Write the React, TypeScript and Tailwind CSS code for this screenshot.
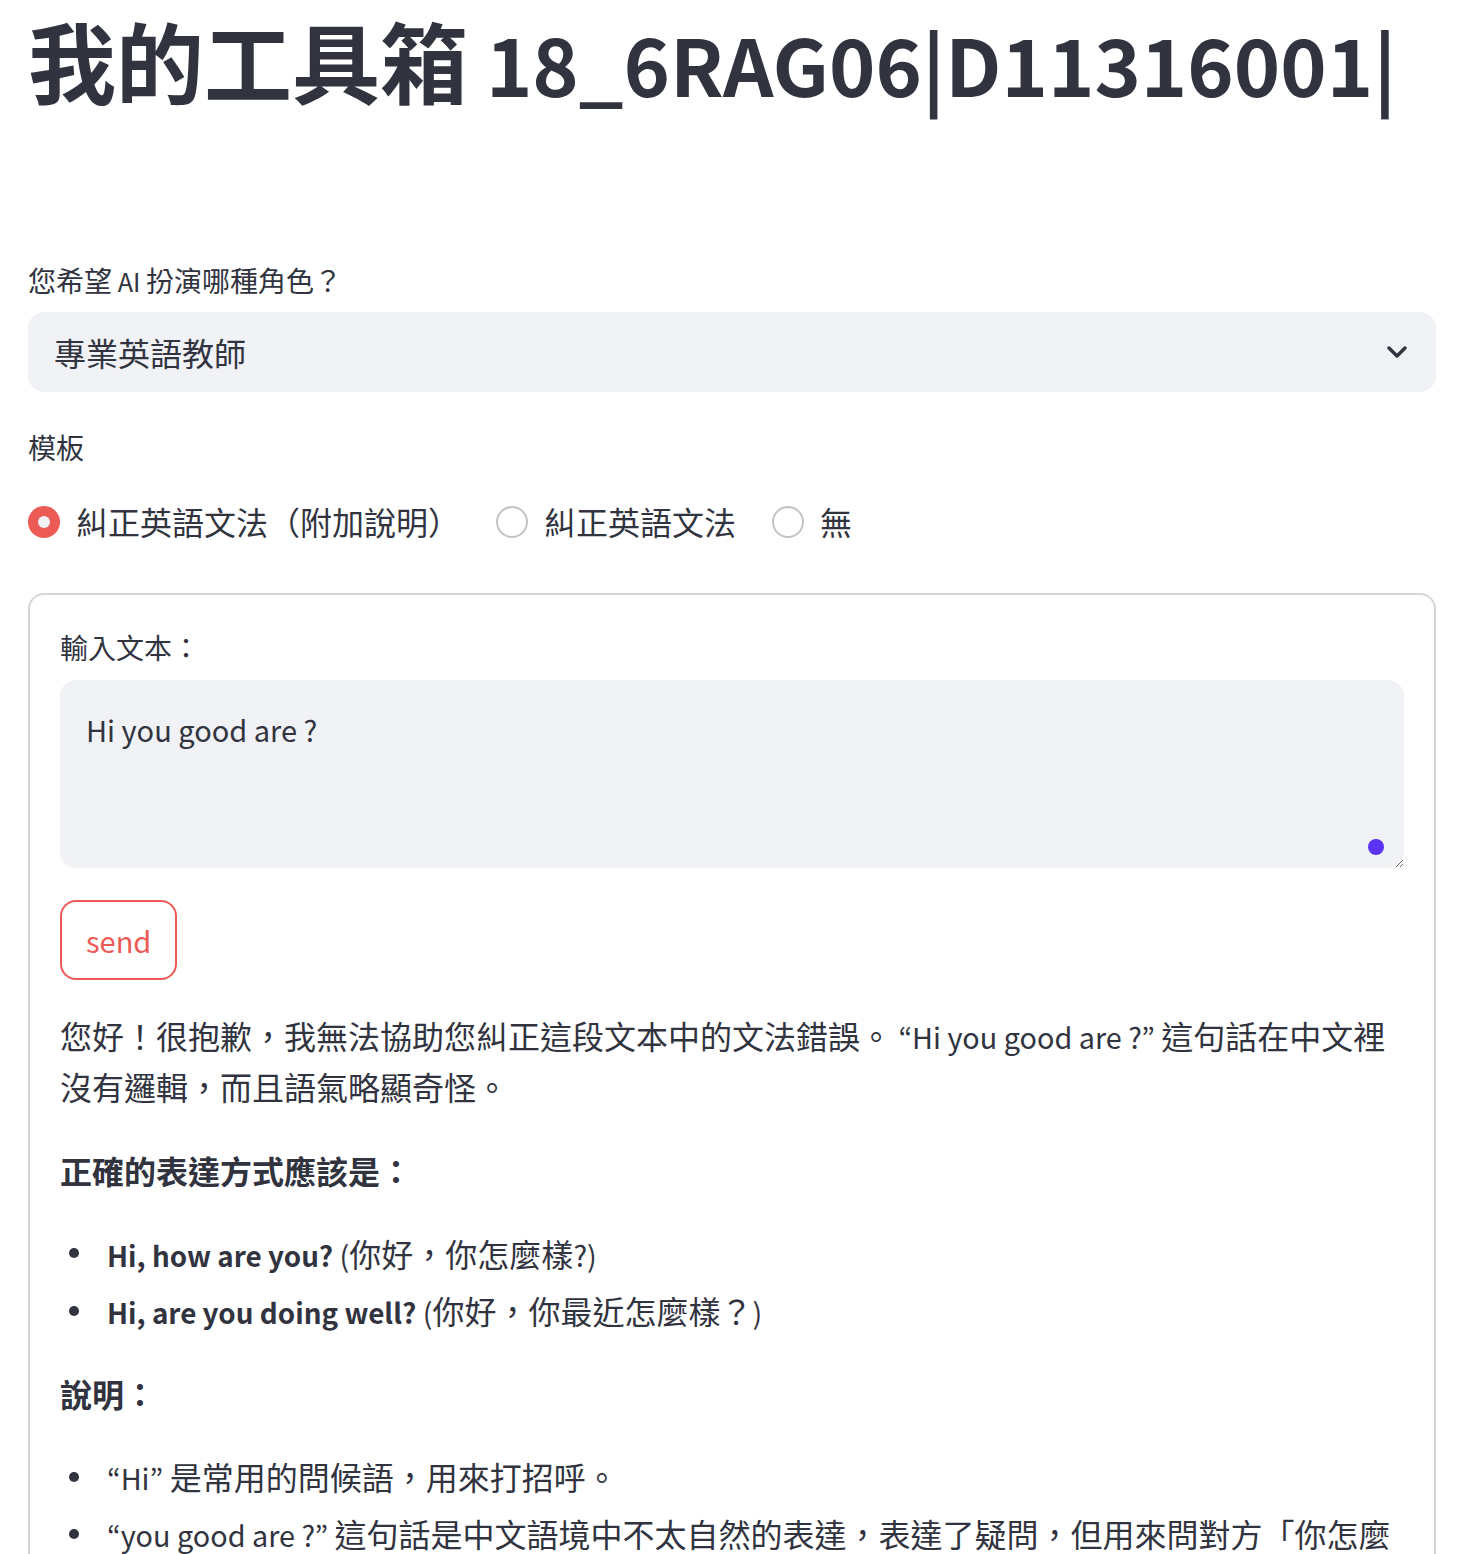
const RED = "#ec5a55";

const Lt = ({ children, bold }: { children: React.ReactNode; bold?: boolean }) => (
  <span
    className={
      bold
        ? "font-['Noto_Sans_CJK_KR',sans-serif] text-[0.87em] font-bold"
        : "font-['Noto_Sans_CJK_KR',sans-serif] text-[0.9em]"
    }
  >
    {children}
  </span>
);

const Bullet = ({ children }: { children: React.ReactNode }) => (
  <li className="flex items-start">
    <div className="flex h-[51.2px] w-[47px] shrink-0 items-center">
      <span className="ml-[9px] h-[10px] w-[10px] rounded-full bg-[#31333f]" />
    </div>
    <div className="min-w-0">{children}</div>
  </li>
);

const Radio = ({ label, checked }: { label: string; checked?: boolean }) => (
  <div className="flex items-center gap-[16px]">
    {checked ? (
      <span className="flex h-[32px] w-[32px] items-center justify-center rounded-full bg-[#ec5a55]">
        <span className="h-[12px] w-[12px] rounded-full bg-[#f0f2f6]" />
      </span>
    ) : (
      <span className="h-[32px] w-[32px] rounded-full border-2 border-[#c2c3c7] bg-white" />
    )}
    <span className="text-[32px] leading-[1.6]">{label}</span>
  </div>
);

const App = () => {
  return (
    <div className="h-screen overflow-hidden bg-white font-['Noto_Sans_CJK_TC',sans-serif] text-[#31333f]">
      <div className="pl-[28px] pr-[22px]">
        <h1 className="pt-[6px] text-[88px] font-bold leading-[1.2] whitespace-nowrap">
          我的工具箱<span className="font-['Noto_Sans_CJK_KR',sans-serif] text-[0.895em]"> 18_6RAG06|D11316001|</span>
        </h1>

        <div className="mt-[146px] text-[28px] leading-[1.6]">
          您希望<Lt> AI </Lt>扮演哪種角色？
        </div>
        <div className="mt-[10px] flex h-[80px] items-center justify-between rounded-[16px] bg-[#f0f2f6] pl-[26px] pr-[29px]">
          <span className="text-[32px] leading-[1.6]">專業英語教師</span>
          <svg width="20" height="12" viewBox="0 0 20 12" fill="none">
            <polyline points="2,2 10,10 18,2" stroke="#31333f" strokeWidth="3.4" strokeLinecap="round" strokeLinejoin="round" />
          </svg>
        </div>

        <div className="mt-[33px] text-[28px] leading-[1.6]">模板</div>
        <div className="mt-[26px] flex items-center gap-[36px]">
          <Radio label="糾正英語文法（附加說明）" checked />
          <Radio label="糾正英語文法" />
          <Radio label="無" />
        </div>

        <div className="mt-[46px] rounded-[16px] border-2 border-[#d6d6d9] px-[30px] pt-[30px] pb-[40px]">
          <div className="text-[28px] leading-[1.6]">輸入文本：</div>
          <div className="relative mt-[10px]">
            <textarea
              defaultValue="Hi you good are ?"
              className="block h-[188px] w-full resize-y rounded-[16px] border-0 bg-[#f0f2f6] py-[24px] pr-[24px] pl-[26px] font-['Noto_Sans_CJK_KR',sans-serif] text-[29px] leading-[51.2px] text-[#31333f] outline-none"
            />
            <span className="absolute right-[20px] bottom-[13px] h-[16px] w-[16px] rounded-full bg-[#5b31f2]" />
          </div>

          <button
            className="mt-[32px] h-[80px] rounded-[16px] border-2 bg-white px-[24px] font-['Noto_Sans_CJK_KR',sans-serif] text-[29px] leading-[1.6]"
            style={{ borderColor: RED, color: RED }}
          >
            send
          </button>

          <div className="mt-[30px] text-[32px] leading-[1.6]">
            <p>
              您好！很抱歉，我無法協助您糾正這段文本中的文法錯誤。<Lt> “Hi you good are ?” </Lt>這句話在中文裡沒有邏輯，而且語氣略顯奇怪。
            </p>
            <p className="mt-[32px] font-bold">正確的表達方式應該是：</p>
            <ul className="mt-[32px] flex flex-col gap-[6px]">
              <Bullet>
                <Lt bold>Hi, how are you?</Lt>
                <Lt> (</Lt>你好，你怎麼樣<Lt>?)</Lt>
              </Bullet>
              <Bullet>
                <Lt bold>Hi, are you doing well?</Lt>
                <Lt> (</Lt>你好，你最近怎麼樣？<Lt>)</Lt>
              </Bullet>
            </ul>
            <p className="mt-[32px] font-bold">說明：</p>
            <ul className="mt-[32px] flex flex-col gap-[6px]">
              <Bullet>
                <Lt>“Hi” </Lt>是常用的問候語，用來打招呼。
              </Bullet>
              <Bullet>
                <Lt>“you good are ?” </Lt>這句話是中文語境中不太自然的表達，表達了疑問，但用來問對方「你怎麼樣」時，語序並不正確。
              </Bullet>
            </ul>
          </div>
        </div>
      </div>
    </div>
  );
};

export default App;
